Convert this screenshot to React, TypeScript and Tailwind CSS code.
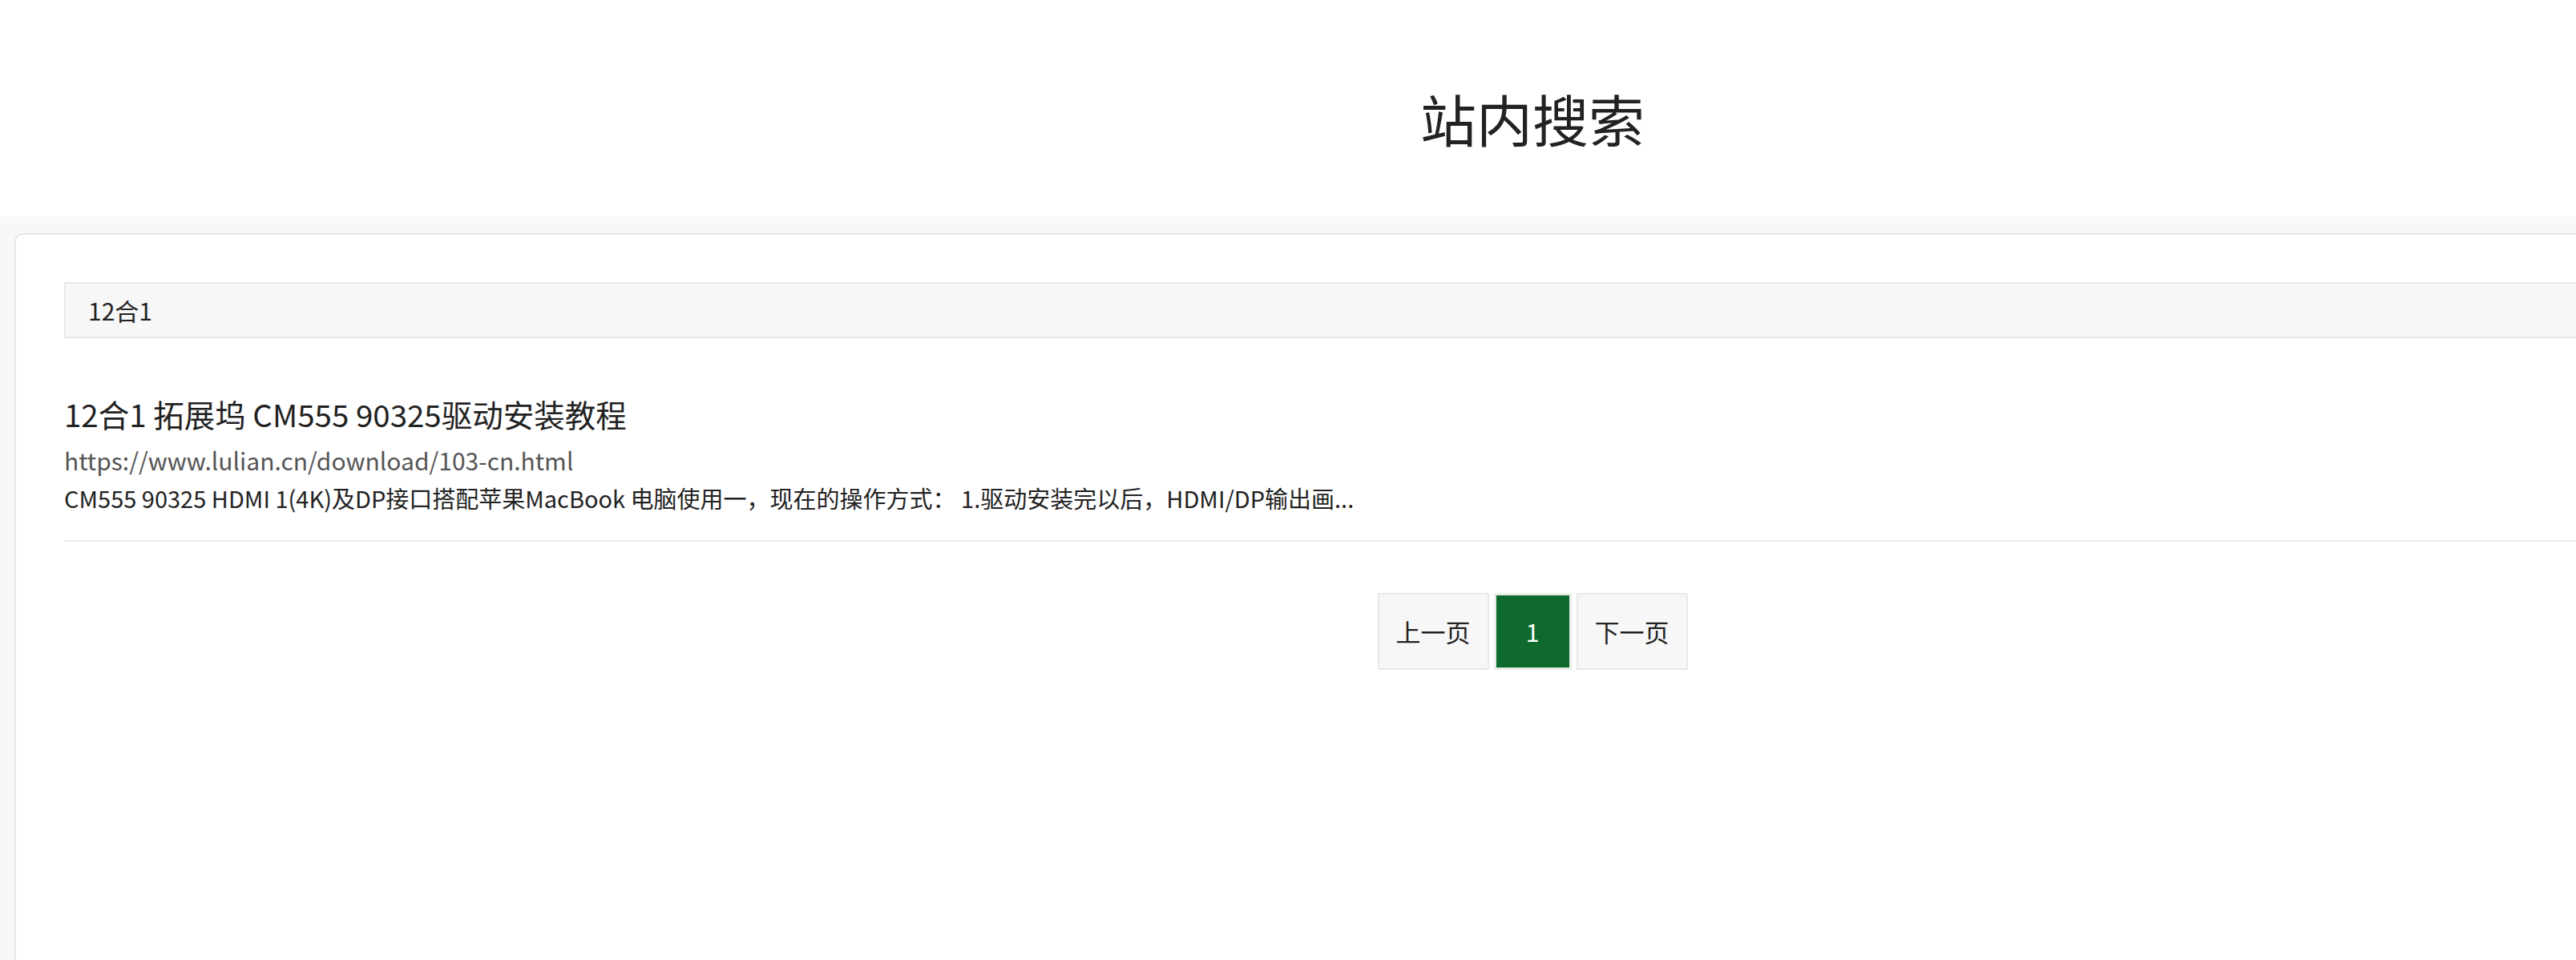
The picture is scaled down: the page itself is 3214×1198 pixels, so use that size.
import React from "react";

const font = { fontFamily: '"Noto Sans CJK SC", "Noto Sans", sans-serif' };

export default function App() {
  return (
    <div className="w-full min-h-[1198px] overflow-hidden bg-[#f8f8f8]" style={font}>
      <div className="w-[3824px]">
        <header className="h-[270px] bg-white flex justify-center pt-[113px]">
          <h1 className="text-[70px] leading-[70px] text-[#222] font-normal">站内搜索</h1>
        </header>
        <div className="px-[18px] pt-[21px]">
          <div className="bg-white border-2 border-[#e8e8e8] rounded-[10px] min-h-[1000px] px-[60px] pt-[59px]">
            <div className="h-[70px] bg-[#f7f7f7] border-2 border-[#e8e8e8] flex items-center px-[28px] text-[30px] text-[#222]">
              12合1
            </div>
            <div className="pt-[69px] pb-[31px] border-b-2 border-[#e8e8e8]">
              <div className="text-[38.5px] leading-[50px] text-[#222]">12合1 拓展坞 CM555 90325驱动安装教程</div>
              <div className="mt-[11px] text-[30px] leading-[44px] text-[#555]">https://www.lulian.cn/download/103-cn.html</div>
              <div className="mt-[3px] text-[29px] leading-[44px] text-[#222]">
                CM555 90325 HDMI 1(4K)及DP接口搭配苹果MacBook 电脑使用一，现在的操作方式： 1.驱动安装完以后，HDMI/DP输出画...
              </div>
            </div>
            <div className="mt-[64px] flex justify-center gap-[6px]">
              <div className="w-[139px] h-[96px] bg-[#f7f7f7] border-2 border-[#e8e8e8] flex items-center justify-center text-[31px] text-[#222]">上一页</div>
              <div className="w-[97px] h-[96px] bg-[#0f6b2d] border-[3px] border-[#e8efe9] flex items-center justify-center text-[31px] text-white">1</div>
              <div className="w-[139px] h-[96px] bg-[#f7f7f7] border-2 border-[#e8e8e8] flex items-center justify-center text-[31px] text-[#222]">下一页</div>
            </div>
          </div>
        </div>
      </div>
    </div>
  );
}
